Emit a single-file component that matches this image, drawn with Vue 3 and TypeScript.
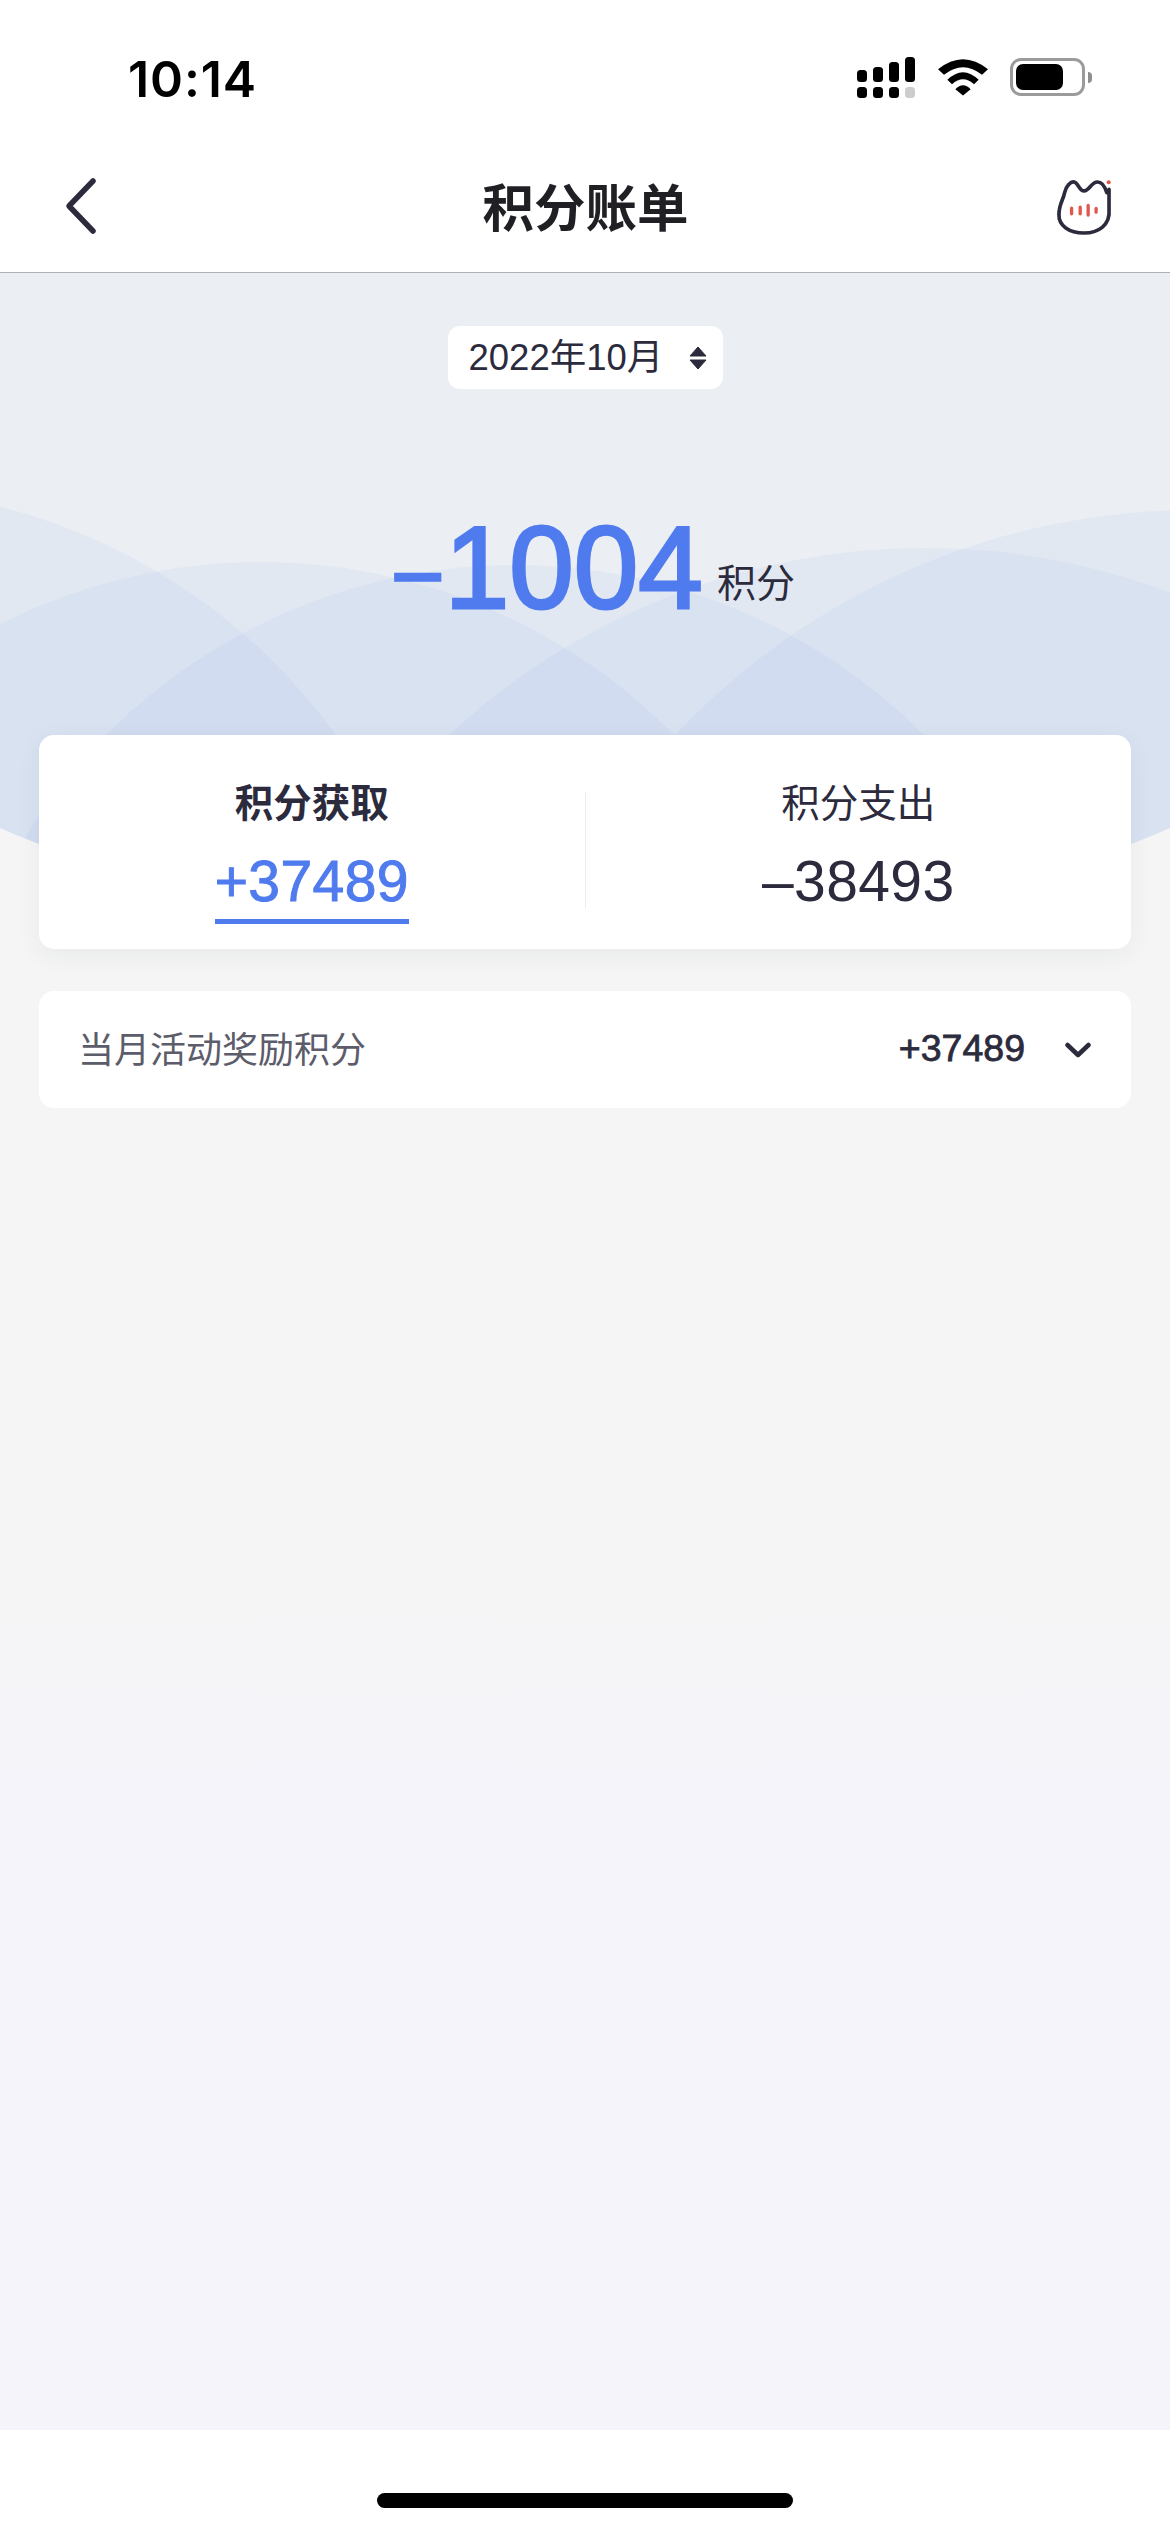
<script setup lang="ts">
const waves = [
  { cx: -148, cy: 1086, r: 598 },
  { cx: 261, cy: 1142, r: 580 },
  { cx: 515, cy: 1142, r: 577 },
  { cx: 925, cy: 1248, r: 700 },
  { cx: 1195, cy: 1223, r: 713 }
]
</script>

<template>
  <div class="page">
    <div class="status-bar">
      <span class="time">10:14</span>
      <div class="status-icons">
        <div class="signal">
          <div class="signal-col"><i class="bar b1"></i><i class="dot"></i></div>
          <div class="signal-col"><i class="bar b2"></i><i class="dot"></i></div>
          <div class="signal-col"><i class="bar b3"></i><i class="dot"></i></div>
          <div class="signal-col"><i class="bar b4"></i><i class="dot off"></i></div>
        </div>
        <svg class="wifi" viewBox="350 88 150 110">
          <path d="M350 118 Q425 58 500 118 L482 135 Q425 90 368 135 Z" />
          <path d="M378 150 Q425 104 472 150 L458 163 Q425 134 392 163 Z" />
          <path d="M402 178 Q425 154 448 178 L425 197 Z" />
        </svg>
        <div class="battery">
          <div class="battery-level"></div>
        </div>
        <div class="battery-nub"></div>
      </div>
    </div>

    <header class="nav">
      <svg class="back" viewBox="0 0 34 58" fill="none">
        <path d="M29 4 L5 29 L29 54" stroke="#2b2b3d" stroke-width="5.5" stroke-linecap="round" stroke-linejoin="round" />
      </svg>
      <h1 class="title">积分账单</h1>
      <svg class="cat" viewBox="705 450 172 170" fill="none">
        <path
          d="M865 480 L865 540 C870 590 830 612 790 612 C745 612 712 590 714 555 C714 525 727 512 731 490 C735 470 750 455 760 458 C772 460 775 485 790 485 C805 485 812 458 830 458 C845 458 852 470 858 490"
          stroke="#2b2b3d"
          stroke-width="11"
          stroke-linecap="round"
          stroke-linejoin="round"
        />
        <path d="M752 537 V554 M778 534 V554 M802 529 V558 M826 538 V549" stroke="#e2574c" stroke-width="10" stroke-linecap="round" />
        <circle cx="864" cy="459" r="6" fill="#e2574c" />
      </svg>
    </header>

    <main class="content">
      <svg class="waves" viewBox="0 273 1170 720">
        <defs>
          <clipPath id="wave-clip">
            <circle cx="585" cy="-538" r="1486" />
          </clipPath>
        </defs>
        <g clip-path="url(#wave-clip)">
          <rect x="0" y="273" width="1170" height="720" fill="#ebeef3" />
          <circle v-for="(w, i) in waves" :key="i" :cx="w.cx" :cy="w.cy" :r="w.r" fill="#6a90f0" opacity="0.065" />
        </g>
      </svg>

      <div class="month-picker">
        <span>2022年10月</span>
        <svg class="sort" viewBox="0 0 18 24">
          <path d="M9 1 L17 10 H1 Z M1 14 H17 L9 23 Z" fill="#2b2b3d" stroke="#2b2b3d" stroke-linejoin="round" />
        </svg>
      </div>

      <div class="total">
        <span class="total-num"><span class="total-sign">−</span>1004</span>
        <span class="total-unit">积分</span>
      </div>

      <section class="summary">
        <div class="tab active">
          <div class="tab-label">积分获取</div>
          <div class="tab-num">+37489</div>
        </div>
        <div class="divider"></div>
        <div class="tab">
          <div class="tab-label">积分支出</div>
          <div class="tab-num">–38493</div>
        </div>
      </section>

      <section class="row">
        <span class="row-label">当月活动奖励积分</span>
        <span class="row-num">+37489</span>
        <svg class="chevron" viewBox="0 0 26 16" fill="none">
          <path d="M2.5 3 L13 13 L23.5 3" stroke="#2b2b3d" stroke-width="4.5" stroke-linecap="round" stroke-linejoin="round" />
        </svg>
      </section>
    </main>

    <footer class="home-area">
      <div class="home-bar"></div>
    </footer>
  </div>
</template>

<style>
html,
body {
  margin: 0;
  background: #fff;
}
</style>

<style scoped>
.page {
  width: 1170px;
  height: 2532px;
  display: flex;
  flex-direction: column;
  overflow: hidden;
  font-family: "Liberation Sans", "Noto Sans CJK SC", sans-serif;
  color: #2b2b3d;
  background: #fff;
}

.status-bar {
  height: 140px;
  box-sizing: border-box;
  padding: 0 78px 0 128px;
  display: flex;
  justify-content: space-between;
  align-items: flex-start;
}

.time {
  margin-top: 47px;
  font-family: Inter, sans-serif;
  font-size: 50px;
  line-height: 64px;
  font-weight: 600;
  letter-spacing: 0.9px;
  color: #000;
}

.status-icons {
  display: flex;
  align-items: flex-start;
}

.signal {
  margin-top: 57px;
  display: flex;
  gap: 6px;
}

.signal-col {
  width: 10px;
  height: 41px;
  display: flex;
  flex-direction: column;
  justify-content: flex-end;
  gap: 5px;
}

.bar,
.dot {
  display: block;
  background: #000;
  border-radius: 3.5px;
}

.b1 { height: 12px; }
.b2 { height: 15px; }
.b3 { height: 20px; }
.b4 { height: 25px; }

.dot {
  height: 11px;
}

.dot.off {
  background: #cdcdcd;
}

.wifi {
  width: 50px;
  height: 37px;
  margin: 59px 0 0 23px;
  fill: #000;
}

.battery {
  width: 75px;
  height: 38px;
  margin: 58px 0 0 22px;
  box-sizing: border-box;
  padding: 3px;
  border: 3px solid #9b9b9b;
  border-radius: 11px;
}

.battery-level {
  width: 47px;
  height: 100%;
  background: #000;
  border-radius: 7px;
}

.battery-nub {
  width: 4px;
  height: 11px;
  margin: 72px 0 0 3px;
  background: #8e8e8e;
  border-radius: 0 6px 6px 0;
}

.nav {
  height: 133px;
  box-sizing: border-box;
  padding: 0 57px 0 64px;
  display: grid;
  grid-template-columns: 1fr auto 1fr;
  align-items: center;
  border-bottom: 1.5px solid #b0b0b6;
}

.back {
  width: 34px;
  height: 58px;
}

.title {
  margin: 6px 6px 0 0;
  font-size: 51.5px;
  line-height: 72px;
  font-weight: 700;
  color: #1f1f24;
}

.cat {
  width: 57px;
  height: 57px;
  margin-top: 3px;
  justify-self: end;
}

.content {
  position: relative;
  flex: 1;
  padding: 53px 39px 0;
  display: flex;
  flex-direction: column;
  background: linear-gradient(180deg, #f5f5f5 0%, #f5f5f5 60%, #f5f4fa 70%);
}

.waves {
  position: absolute;
  left: 0;
  top: 0;
  width: 1170px;
  height: 720px;
}

.month-picker {
  position: relative;
  align-self: center;
  width: 275px;
  height: 63px;
  box-sizing: border-box;
  padding: 0 16px 6px 21px;
  display: flex;
  justify-content: space-between;
  align-items: center;
  background: #fff;
  border-radius: 12px;
  font-size: 36.5px;
  color: #2b2b3d;
}

.sort {
  width: 18px;
  height: 24px;
  margin-top: 6px;
}

.total {
  position: relative;
  height: 346px;
  box-sizing: border-box;
  padding: 114px 0 0 16px;
  display: flex;
  justify-content: center;
  align-items: flex-start;
  gap: 14px;
}

.total-num {
  font-size: 116px;
  line-height: 130px;
  color: #4f7bee;
  -webkit-text-stroke: 3px #4f7bee;
}

.total-sign {
  font-size: 92px;
  -webkit-text-stroke-width: 2.5px;
}

.total-unit {
  margin-top: 58px;
  font-size: 39px;
  line-height: 46px;
}

.summary {
  position: relative;
  height: 214px;
  display: flex;
  align-items: flex-start;
  background: #fff;
  border-radius: 15px;
  box-shadow: 0 6px 24px rgba(40, 50, 80, 0.06);
}

.tab {
  flex: 1;
  display: flex;
  flex-direction: column;
  align-items: center;
  padding-top: 46px;
}

.tab-label {
  font-size: 38.5px;
  line-height: 46px;
}

.tab-num {
  margin-top: 21px;
  font-size: 57px;
  line-height: 66px;
  letter-spacing: 0.4px;
}

.tab.active .tab-label {
  font-weight: 700;
}

.tab.active .tab-num {
  color: #4f7bee;
  -webkit-text-stroke: 1px #4f7bee;
  border-bottom: 5px solid #4f7bee;
  padding: 0 0 5px;
}

.divider {
  width: 1px;
  height: 116px;
  margin-top: 57px;
  background: #ececf0;
}

.row {
  position: relative;
  height: 117px;
  margin-top: 42px;
  box-sizing: border-box;
  padding: 0 40px 0 39px;
  display: flex;
  align-items: center;
  background: #fff;
  border-radius: 15px;
}

.row-label {
  flex: 1;
  margin-bottom: 5px;
  font-size: 36px;
  color: #5c5c6a;
}

.row-num {
  margin-bottom: 3px;
  font-size: 37.5px;
  -webkit-text-stroke: 0.8px #2b2b3d;
}

.chevron {
  width: 26px;
  height: 16px;
  margin-left: 40px;
}

.home-area {
  height: 102px;
  display: flex;
  justify-content: center;
  background: #fff;
}

.home-bar {
  width: 416px;
  height: 15px;
  margin-top: 63px;
  background: #000;
  border-radius: 8px;
}
</style>
